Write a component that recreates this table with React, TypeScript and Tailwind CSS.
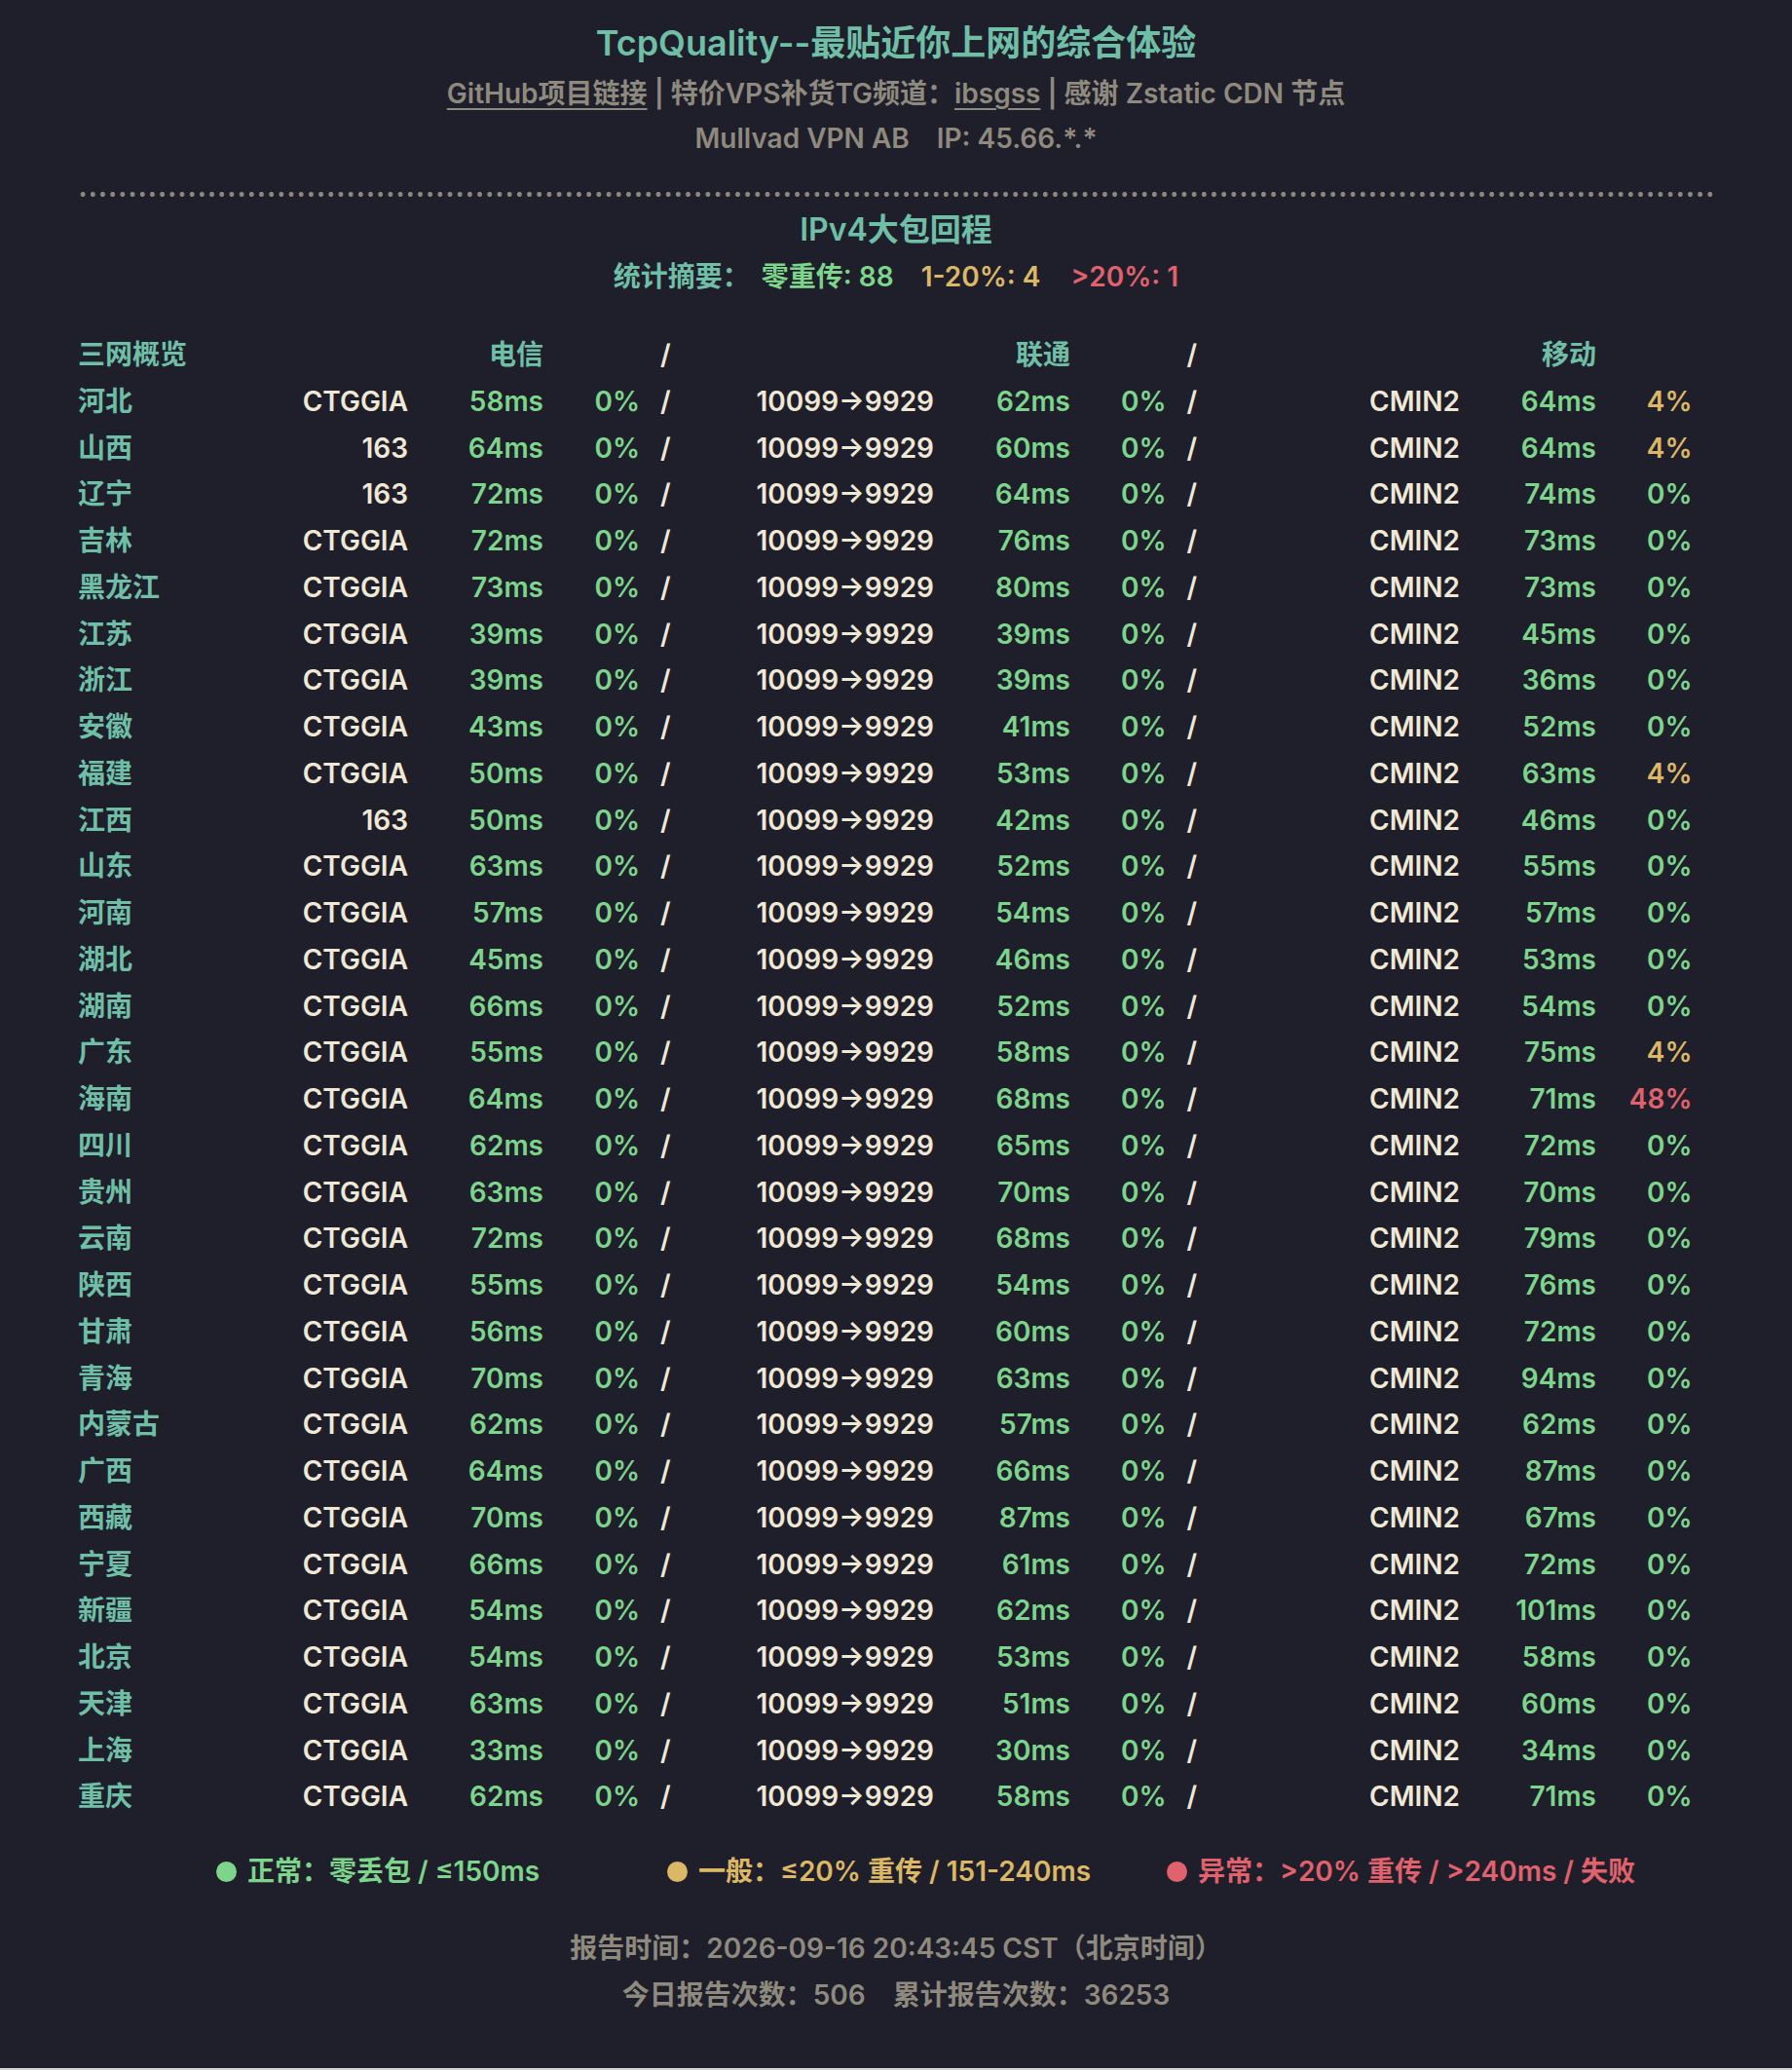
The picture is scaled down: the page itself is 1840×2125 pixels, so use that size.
import React from "react";

type Row = [string, string, number, number, number, number, number, number];

const rows: Row[] = [
  ["河北", "CTGGIA", 58, 0, 62, 0, 64, 4],
  ["山西", "163", 64, 0, 60, 0, 64, 4],
  ["辽宁", "163", 72, 0, 64, 0, 74, 0],
  ["吉林", "CTGGIA", 72, 0, 76, 0, 73, 0],
  ["黑龙江", "CTGGIA", 73, 0, 80, 0, 73, 0],
  ["江苏", "CTGGIA", 39, 0, 39, 0, 45, 0],
  ["浙江", "CTGGIA", 39, 0, 39, 0, 36, 0],
  ["安徽", "CTGGIA", 43, 0, 41, 0, 52, 0],
  ["福建", "CTGGIA", 50, 0, 53, 0, 63, 4],
  ["江西", "163", 50, 0, 42, 0, 46, 0],
  ["山东", "CTGGIA", 63, 0, 52, 0, 55, 0],
  ["河南", "CTGGIA", 57, 0, 54, 0, 57, 0],
  ["湖北", "CTGGIA", 45, 0, 46, 0, 53, 0],
  ["湖南", "CTGGIA", 66, 0, 52, 0, 54, 0],
  ["广东", "CTGGIA", 55, 0, 58, 0, 75, 4],
  ["海南", "CTGGIA", 64, 0, 68, 0, 71, 48],
  ["四川", "CTGGIA", 62, 0, 65, 0, 72, 0],
  ["贵州", "CTGGIA", 63, 0, 70, 0, 70, 0],
  ["云南", "CTGGIA", 72, 0, 68, 0, 79, 0],
  ["陕西", "CTGGIA", 55, 0, 54, 0, 76, 0],
  ["甘肃", "CTGGIA", 56, 0, 60, 0, 72, 0],
  ["青海", "CTGGIA", 70, 0, 63, 0, 94, 0],
  ["内蒙古", "CTGGIA", 62, 0, 57, 0, 62, 0],
  ["广西", "CTGGIA", 64, 0, 66, 0, 87, 0],
  ["西藏", "CTGGIA", 70, 0, 87, 0, 67, 0],
  ["宁夏", "CTGGIA", 66, 0, 61, 0, 72, 0],
  ["新疆", "CTGGIA", 54, 0, 62, 0, 101, 0],
  ["北京", "CTGGIA", 54, 0, 53, 0, 58, 0],
  ["天津", "CTGGIA", 63, 0, 51, 0, 60, 0],
  ["上海", "CTGGIA", 33, 0, 30, 0, 34, 0],
  ["重庆", "CTGGIA", 62, 0, 58, 0, 71, 0],
];

const GRID =
  "grid grid-cols-[220px_119px_139px_99px_63px_239px_140px_98.5px_62.5px_239px_140px_98.5px] h-[47.75px] items-center leading-[47.75px]";

function lossColor(v: number) {
  if (v === 0) return "text-[#7dd48b]";
  if (v <= 20) return "text-[#dbb766]";
  return "text-[#e0626c]";
}

function msColor(v: number) {
  if (v <= 150) return "text-[#7dd48b]";
  if (v <= 240) return "text-[#dbb766]";
  return "text-[#e0626c]";
}

function DataRow({ r }: { r: Row }) {
  const [prov, ct, ctMs, ctLoss, cuMs, cuLoss, cmMs, cmLoss] = r;
  return (
    <div className={GRID}>
      <div className="text-left text-[#6fbfa7]">{prov}</div>
      <div className="text-right text-[#efe8d5]">{ct}</div>
      <div className={`text-right ${msColor(ctMs)}`}>{ctMs}ms</div>
      <div className={`text-right ${lossColor(ctLoss)}`}>{ctLoss}%</div>
      <div className="pl-[21px] text-left text-[#efe8d5]">/</div>
      <div className="text-right text-[#efe8d5]">10099→9929</div>
      <div className={`text-right ${msColor(cuMs)}`}>{cuMs}ms</div>
      <div className={`text-right ${lossColor(cuLoss)}`}>{cuLoss}%</div>
      <div className="pl-[21px] text-left text-[#efe8d5]">/</div>
      <div className="text-right text-[#efe8d5]">CMIN2</div>
      <div className={`text-right ${msColor(cmMs)}`}>{cmMs}ms</div>
      <div className={`text-right ${lossColor(cmLoss)}`}>{cmLoss}%</div>
    </div>
  );
}

export default function App() {
  return (
    <div className="bg-[#d4d4d4] min-h-screen">
      <div
        className="bg-[#1f1e2b] pt-[14px] pb-[51px] font-semibold text-[28px]"
        style={{ fontFamily: 'Inter, "Noto Sans CJK SC", sans-serif' }}
      >
        <div className="mx-auto w-[1680px]">
          <div className="text-center text-[36px] leading-[60px] h-[60px] text-[#6fbfa7]">
            TcpQuality--最贴近你上网的综合体验
          </div>
          <div className="text-center h-[44px] leading-[44px] text-[#8f8a7e]">
            <span className="underline underline-offset-[5px] decoration-2">GitHub项目链接</span>
            <span> | 特价VPS补货TG频道：</span>
            <span className="underline underline-offset-[5px] decoration-2">ibsgss</span>
            <span> | 感谢 Zstatic CDN 节点</span>
          </div>
          <div className="mt-[2px] text-center h-[44px] leading-[44px] text-[#8f8a7e]">
            <span>Mullvad VPN AB</span>
            <span className="ml-[28px]">IP: 45.66.*.*</span>
          </div>

          <div className="mt-[33px] h-[5px] bg-[radial-gradient(circle,#8c877b_2.3px,transparent_2.8px)] bg-[length:10.2px_5px] bg-repeat-x" />

          <div className="mt-[10px] text-center text-[32px] h-[48px] leading-[48px] text-[#6fbfa7]">
            IPv4大包回程
          </div>
          <div className="mt-[2px] h-[44px] leading-[44px] flex justify-center">
            <span className="text-[#6fbfa7]">统计摘要：</span>
            <span className="ml-[12px] text-[#7dd48b]">零重传: 88</span>
            <span className="ml-[28px] text-[#dbb766]">1-20%: 4</span>
            <span className="ml-[31px] text-[#e0626c]">&gt;20%: 1</span>
          </div>

          <div className="mt-[35px]">
            <div className={GRID}>
              <div className="text-left text-[#6fbfa7]">三网概览</div>
              <div />
              <div className="text-right text-[#6fbfa7]">电信</div>
              <div />
              <div className="pl-[21px] text-left text-[#efe8d5]">/</div>
              <div />
              <div className="text-right text-[#6fbfa7]">联通</div>
              <div />
              <div className="pl-[21px] text-left text-[#efe8d5]">/</div>
              <div />
              <div className="text-right text-[#6fbfa7]">移动</div>
              <div />
            </div>
            {rows.map((r) => (
              <DataRow key={r[0]} r={r} />
            ))}
          </div>
        </div>

        <div className="mt-[30px] h-[44px] flex items-center">
          <div className="ml-[222px] flex items-center text-[#7dd48b]">
            <span className="w-[21px] h-[21px] rounded-full bg-[#7dd48b]" />
            <span className="ml-[11px]">正常：零丢包 / ≤150ms</span>
          </div>
          <div className="ml-[131px] flex items-center text-[#dbb766]">
            <span className="w-[21px] h-[21px] rounded-full bg-[#dbb766]" />
            <span className="ml-[11px]">一般：≤20% 重传 / 151-240ms</span>
          </div>
          <div className="ml-[78px] flex items-center text-[#e0626c]">
            <span className="w-[21px] h-[21px] rounded-full bg-[#e0626c]" />
            <span className="ml-[11px]">异常：&gt;20% 重传 / &gt;240ms / 失败</span>
          </div>
        </div>

        <div className="mt-[33px] text-center text-[#8f8a7e] leading-[48px]">
          <div>报告时间：2026-09-16 20:43:45 CST（北京时间）</div>
          <div>
            <span>今日报告次数：506</span>
            <span className="ml-[28px]">累计报告次数：36253</span>
          </div>
        </div>
      </div>
    </div>
  );
}
